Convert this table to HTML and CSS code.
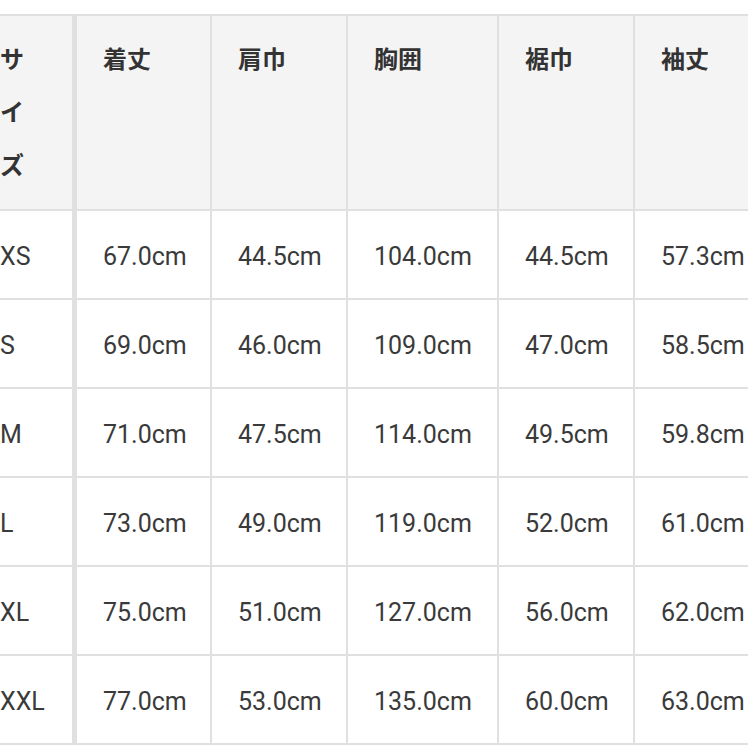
FILE: index.html
```html
<!DOCTYPE html>
<html lang="ja">
<head>
<meta charset="utf-8">
<link rel="stylesheet" href="styles.css">
</head>
<body>
<div class="wrap">
<table class="size-table">
<colgroup>
<col class="c0"><col class="c1"><col class="c2"><col class="c3"><col class="c4"><col class="c5">
</colgroup>
<thead>
<tr>
<th class="first">サイズ</th>
<th>着丈</th>
<th>肩巾</th>
<th>胸囲</th>
<th>裾巾</th>
<th>袖丈</th>
</tr>
</thead>
<tbody>
<tr><td class="first">XS</td><td>67.0cm</td><td>44.5cm</td><td>104.0cm</td><td>44.5cm</td><td>57.3cm</td></tr>
<tr><td class="first">S</td><td>69.0cm</td><td>46.0cm</td><td>109.0cm</td><td>47.0cm</td><td>58.5cm</td></tr>
<tr><td class="first">M</td><td>71.0cm</td><td>47.5cm</td><td>114.0cm</td><td>49.5cm</td><td>59.8cm</td></tr>
<tr><td class="first">L</td><td>73.0cm</td><td>49.0cm</td><td>119.0cm</td><td>52.0cm</td><td>61.0cm</td></tr>
<tr><td class="first">XL</td><td>75.0cm</td><td>51.0cm</td><td>127.0cm</td><td>56.0cm</td><td>62.0cm</td></tr>
<tr><td class="first">XXL</td><td>77.0cm</td><td>53.0cm</td><td>135.0cm</td><td>60.0cm</td><td>63.0cm</td></tr>
</tbody>
</table>
</div>
</body>
</html>
```

FILE: styles.css
```css
html, body {
  margin: 0;
  padding: 0;
  background: #ffffff;
}
.wrap {
  width: 748px;
  height: 748px;
  overflow: hidden;
  padding-top: 14px;
  box-sizing: border-box;
}
.size-table {
  border-collapse: separate;
  border-spacing: 0;
  table-layout: fixed;
  width: 820px;
  border-top: 2px solid #e0e0e0;
  font-family: Roboto, "Noto Sans CJK JP", sans-serif;
  color: #3a3a3a;
}
.c0 { width: 77px; }
.c1 { width: 135px; }
.c2 { width: 136px; }
.c3 { width: 151px; }
.c4 { width: 136px; }
.c5 { width: 185px; }
th, td {
  text-align: left;
  border-right: 2px solid #e0e0e0;
  border-bottom: 2px solid #e0e0e0;
  padding: 0 0 0 26px;
  box-sizing: border-box;
}
th {
  background: #f4f4f4;
  font-family: "Noto Sans CJK JP", sans-serif;
  font-weight: 700;
  font-size: 24px;
  line-height: 53px;
  padding-top: 15px;
  padding-bottom: 19px;
  vertical-align: top;
  color: #333333;
}
td {
  font-size: 25px;
  line-height: 83px;
  padding-top: 4px;
  height: 89px;
  vertical-align: middle;
  white-space: nowrap;
}
th.first, td.first {
  padding-left: 0;
  padding-right: 26px;
  border-right: 5px solid #e0e0e0;
}
th.first {
  word-break: break-all;
  white-space: normal;
}
```
